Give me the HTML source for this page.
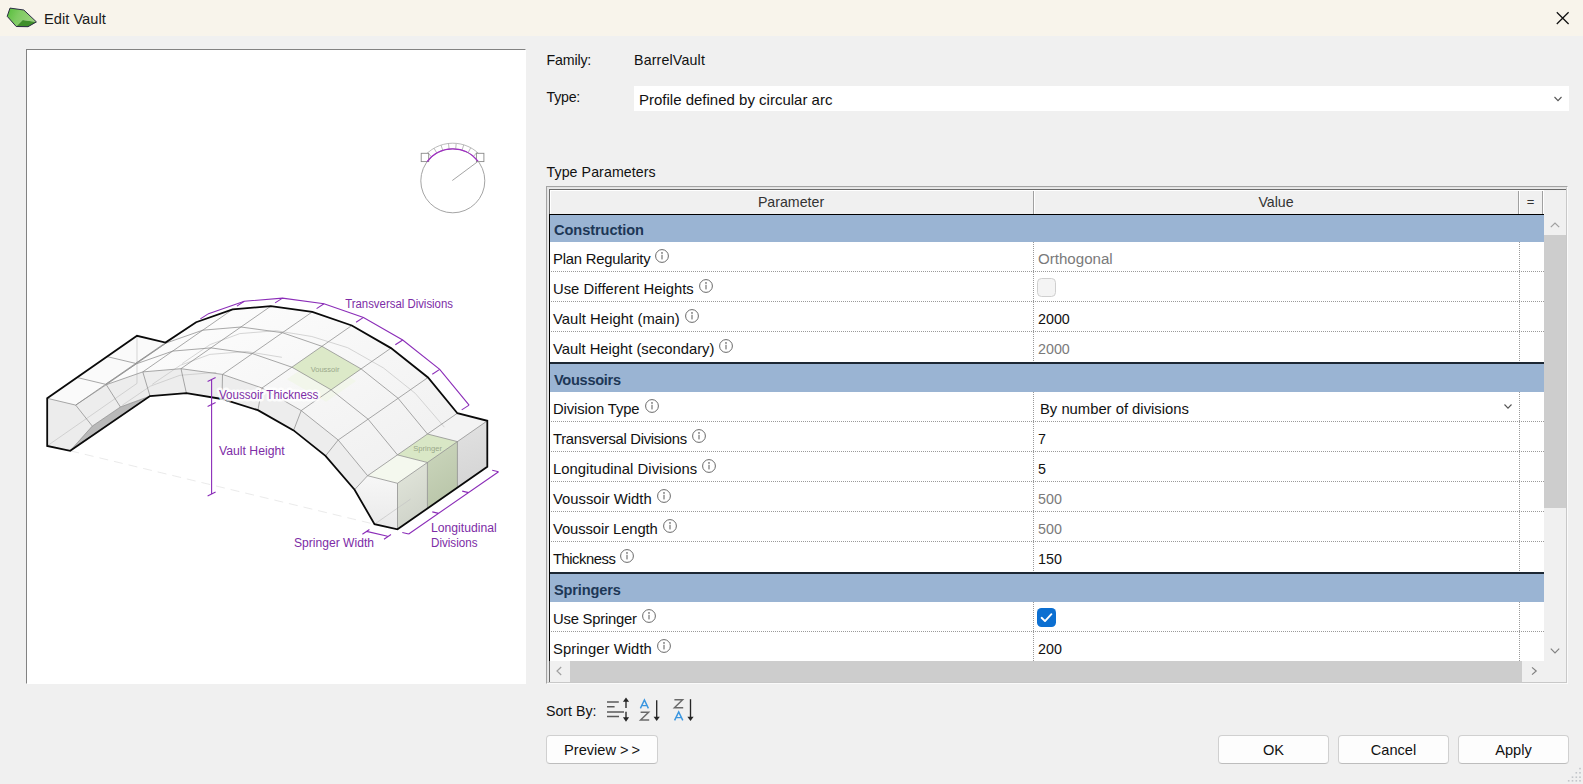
<!DOCTYPE html>
<html><head><meta charset="utf-8"><title>Edit Vault</title>
<style>
*{box-sizing:border-box;margin:0;padding:0}
html,body{width:1583px;height:784px;overflow:hidden;background:#f0f0f0;font-family:"Liberation Sans",sans-serif;color:#000}
.abs{position:absolute}
#title{left:0;top:0;width:1583px;height:36px;background:#f8f4eb}
#title .t{left:44px;top:9.7px;font-size:14.7px;line-height:18px;color:#1a1a1a;white-space:nowrap}
#panel{left:26px;top:49px;width:500px;height:635px;background:#fff;border-top:1px solid #828282;border-left:1px solid #828282;border-right:1px solid #fff;border-bottom:1px solid #fff}
.lbl{font-size:14.2px;line-height:18px;white-space:nowrap;color:#111}
#combo{left:634px;top:86px;width:935px;height:25px;background:#fff}
#tbl{left:546px;top:186px;width:1021px;height:498px;background:#fff;border:1px solid #a0a0a0}
.btn{height:29px;background:#fdfdfd;border:1px solid #d0d0d0;border-bottom-color:#bdbdbd;border-radius:4px;font-size:14.6px;line-height:27px;text-align:center;color:#111;top:735px;padding-top:1.3px}

.hd{top:193px;height:18px;line-height:18px;font-size:14.2px;text-align:center;color:#333}
.band{left:549px;width:995px;height:28px;background:#9ab4d3}
.band span{position:absolute;left:5px;top:6.6px;font-size:14.6px;line-height:18px;font-weight:bold;color:#1d3756;white-space:nowrap}
.row{left:549px;width:995px;background:#fff;overflow:hidden}
.pn,.pv{font-size:14.8px;line-height:18px;white-space:nowrap;color:#111}
.vd{top:0;width:1px;background-image:linear-gradient(#9a9a9a 50%,transparent 50%);background-size:1px 2px}
.hdot{left:0;width:995px;height:1px;background-image:linear-gradient(90deg,#9a9a9a 50%,transparent 50%);background-size:2px 1px}
</style></head><body>
<div id="title" class="abs">
<svg class="abs" style="left:5px;top:6px" width="34" height="24" viewBox="5 6 34 24"><defs><linearGradient id="ig" x1="0" y1="0" x2="1" y2="0.3"><stop offset="0" stop-color="#55bd3a"/><stop offset="0.45" stop-color="#7fcb62"/><stop offset="1" stop-color="#9ad27c"/></linearGradient></defs><polygon points="7.2,16.3 10,8.1 23.8,10 36.4,21.9 22.7,20 16.2,26.5" fill="url(#ig)"/><polygon points="16.2,26.5 22.7,20 36.4,21.9 28,26.7" fill="#3f8f2a"/><polygon points="7.2,16.3 10,8.1 23.8,10 36.4,21.9 28,26.7 16.2,26.5" fill="none" stroke="#24223f" stroke-width="0.95" stroke-linejoin="round"/></svg>
<div class="abs t">Edit Vault</div>
<svg class="abs" style="left:1555px;top:10px" width="16" height="16" viewBox="0 0 16 16"><path d="M1.8 2.2L13.6 14M13.6 2.2L1.8 14" stroke="#111" stroke-width="1.25" fill="none"/></svg>
</div>
<div id="panel" class="abs"></div>
<div class="abs lbl" style="left:546.5px;top:51px;letter-spacing:-0.15px">Family:</div>
<div class="abs lbl" style="left:634px;top:51px;letter-spacing:0.17px">BarrelVault</div>
<div class="abs lbl" style="left:546.5px;top:88px;letter-spacing:-0.24px">Type:</div>
<div id="combo" class="abs"><div class="abs" style="left:5px;top:5px;font-size:15px;line-height:18px;white-space:nowrap;color:#111">Profile defined by circular arc</div><svg class="abs" style="left:918.5px;top:8.6px" width="10" height="8" viewBox="0 0 10 8"><path d="M1.5 2L5 5.6L8.5 2" fill="none" stroke="#555" stroke-width="1.1"/></svg></div>
<div class="abs lbl" style="left:546.5px;top:162.7px;letter-spacing:0.08px">Type Parameters</div>

<div class="abs" style="left:546px;top:186px;width:1022px;height:498px;border:1px solid #a3a3a3;border-right-color:#fafafa;border-bottom-color:#fafafa;background:#fff"></div>
<div class="abs" style="left:547px;top:187px;width:1020px;height:496px;border:1px solid #e3e3e3;border-right-color:#c8c8c8;border-bottom-color:#c8c8c8"></div>
<div class="abs" style="left:548px;top:188px;width:1018px;height:494px;border-top:1px solid #e9e9e9;border-left:1px solid #e9e9e9"></div>
<div class="abs" style="left:549px;top:189px;width:1017px;height:493px;border-top:1px solid #6b6b6b;border-left:1px solid #6b6b6b;z-index:3"></div>
<div class="abs" style="left:550px;top:190px;width:994px;height:24px;background:#f0f0f0;border-top:1px solid #fff;border-left:1px solid #fff"></div>
<div class="abs" style="left:1544px;top:190px;width:22px;height:24px;background:#f0f0f0"></div>
<div class="abs" style="left:1033px;top:191px;width:1px;height:23px;background:#a0a0a0"></div>
<div class="abs" style="left:1034px;top:191px;width:1px;height:23px;background:#fff"></div>
<div class="abs" style="left:1518px;top:191px;width:1px;height:23px;background:#a0a0a0"></div>
<div class="abs" style="left:1519px;top:191px;width:1px;height:23px;background:#fff"></div>
<div class="abs" style="left:1542px;top:191px;width:1px;height:23px;background:#a0a0a0"></div>
<div class="abs" style="left:1543px;top:191px;width:1px;height:23px;background:#fff"></div>
<div class="abs hd" style="left:549px;width:484px">Parameter</div>
<div class="abs hd" style="left:1034px;width:484px">Value</div>
<div class="abs hd" style="left:1519px;width:23px;font-size:13px">=</div>
<div class="abs" style="left:549px;top:214px;width:995px;height:1px;background:#000;z-index:4"></div>
<div class="abs" style="left:549px;top:214px;width:1px;height:447px;background:#000;z-index:4"></div>
<div class="abs band" style="top:214px"><span style="letter-spacing:-0.07px">Construction</span></div>
<div class="abs row" style="top:242px;height:30px">
<div class="abs pn" style="left:4px;top:7.5px;letter-spacing:-0.196px">Plan Regularity</div>
<svg class="abs" style="left:105.4px;top:6px" width="16" height="16" viewBox="0 0 16 16"><circle cx="8" cy="8" r="6.4" fill="none" stroke="#6a6a6a" stroke-width="1"/><circle cx="8" cy="4.9" r="0.85" fill="#6a6a6a"/><rect x="7.45" y="6.8" width="1.1" height="4.6" fill="#6a6a6a"/></svg>
<div class="abs pv" style="left:489px;top:7.7px;color:#7a7a7a;font-size:15.1px">Orthogonal</div>
<div class="abs vd" style="left:484px;height:30px"></div><div class="abs vd" style="left:970px;height:30px"></div>
<div class="abs hdot" style="top:29px"></div>
</div>
<div class="abs row" style="top:272px;height:30px">
<div class="abs pn" style="left:4px;top:7.5px;letter-spacing:0.02px">Use Different Heights</div>
<svg class="abs" style="left:148.8px;top:6px" width="16" height="16" viewBox="0 0 16 16"><circle cx="8" cy="8" r="6.4" fill="none" stroke="#6a6a6a" stroke-width="1"/><circle cx="8" cy="4.9" r="0.85" fill="#6a6a6a"/><rect x="7.45" y="6.8" width="1.1" height="4.6" fill="#6a6a6a"/></svg>
<div class="abs" style="left:488px;top:6px;width:19px;height:19px;border:1px solid #cfcfcf;border-radius:4.5px;background:#f4f4f4"></div>
<div class="abs vd" style="left:484px;height:30px"></div><div class="abs vd" style="left:970px;height:30px"></div>
<div class="abs hdot" style="top:29px"></div>
</div>
<div class="abs row" style="top:302px;height:30px">
<div class="abs pn" style="left:4px;top:7.5px;letter-spacing:0.06px">Vault Height (main)</div>
<svg class="abs" style="left:134.7px;top:6px" width="16" height="16" viewBox="0 0 16 16"><circle cx="8" cy="8" r="6.4" fill="none" stroke="#6a6a6a" stroke-width="1"/><circle cx="8" cy="4.9" r="0.85" fill="#6a6a6a"/><rect x="7.45" y="6.8" width="1.1" height="4.6" fill="#6a6a6a"/></svg>
<div class="abs pv" style="left:489px;top:7.7px;font-size:14.3px">2000</div>
<div class="abs vd" style="left:484px;height:30px"></div><div class="abs vd" style="left:970px;height:30px"></div>
<div class="abs hdot" style="top:29px"></div>
</div>
<div class="abs row" style="top:332px;height:30px">
<div class="abs pn" style="left:4px;top:7.5px;letter-spacing:-0.015px">Vault Height (secondary)</div>
<svg class="abs" style="left:169.4px;top:6px" width="16" height="16" viewBox="0 0 16 16"><circle cx="8" cy="8" r="6.4" fill="none" stroke="#6a6a6a" stroke-width="1"/><circle cx="8" cy="4.9" r="0.85" fill="#6a6a6a"/><rect x="7.45" y="6.8" width="1.1" height="4.6" fill="#6a6a6a"/></svg>
<div class="abs pv" style="left:489px;top:7.7px;color:#7a7a7a;font-size:14.3px">2000</div>
<div class="abs vd" style="left:484px;height:30px"></div><div class="abs vd" style="left:970px;height:30px"></div>
</div>
<div class="abs" style="left:549px;top:362px;width:995px;height:2px;background:#1c2733"></div>
<div class="abs band" style="top:364px"><span style="letter-spacing:-0.3px">Voussoirs</span></div>
<div class="abs row" style="top:392px;height:30px">
<div class="abs pn" style="left:4px;top:7.5px;letter-spacing:-0.095px">Division Type</div>
<svg class="abs" style="left:94.5px;top:6px" width="16" height="16" viewBox="0 0 16 16"><circle cx="8" cy="8" r="6.4" fill="none" stroke="#6a6a6a" stroke-width="1"/><circle cx="8" cy="4.9" r="0.85" fill="#6a6a6a"/><rect x="7.45" y="6.8" width="1.1" height="4.6" fill="#6a6a6a"/></svg>
<div class="abs pv" style="left:491px;top:7.5px">By number of divisions</div>
<svg class="abs" style="left:954px;top:11px" width="10" height="8" viewBox="0 0 10 8"><path d="M1.5 1.5L5 5.2L8.5 1.5" fill="none" stroke="#555" stroke-width="1.1"/></svg>
<div class="abs vd" style="left:484px;height:30px"></div><div class="abs vd" style="left:970px;height:30px"></div>
<div class="abs hdot" style="top:29px"></div>
</div>
<div class="abs row" style="top:422px;height:30px">
<div class="abs pn" style="left:4px;top:7.5px;letter-spacing:-0.298px">Transversal Divisions</div>
<svg class="abs" style="left:141.8px;top:6px" width="16" height="16" viewBox="0 0 16 16"><circle cx="8" cy="8" r="6.4" fill="none" stroke="#6a6a6a" stroke-width="1"/><circle cx="8" cy="4.9" r="0.85" fill="#6a6a6a"/><rect x="7.45" y="6.8" width="1.1" height="4.6" fill="#6a6a6a"/></svg>
<div class="abs pv" style="left:489px;top:7.7px;font-size:14.3px">7</div>
<div class="abs vd" style="left:484px;height:30px"></div><div class="abs vd" style="left:970px;height:30px"></div>
<div class="abs hdot" style="top:29px"></div>
</div>
<div class="abs row" style="top:452px;height:30px">
<div class="abs pn" style="left:4px;top:7.5px;letter-spacing:0.049px">Longitudinal Divisions</div>
<svg class="abs" style="left:152.2px;top:6px" width="16" height="16" viewBox="0 0 16 16"><circle cx="8" cy="8" r="6.4" fill="none" stroke="#6a6a6a" stroke-width="1"/><circle cx="8" cy="4.9" r="0.85" fill="#6a6a6a"/><rect x="7.45" y="6.8" width="1.1" height="4.6" fill="#6a6a6a"/></svg>
<div class="abs pv" style="left:489px;top:7.7px;font-size:14.3px">5</div>
<div class="abs vd" style="left:484px;height:30px"></div><div class="abs vd" style="left:970px;height:30px"></div>
<div class="abs hdot" style="top:29px"></div>
</div>
<div class="abs row" style="top:482px;height:30px">
<div class="abs pn" style="left:4px;top:7.5px;letter-spacing:0.0px">Voussoir Width</div>
<svg class="abs" style="left:106.7px;top:6px" width="16" height="16" viewBox="0 0 16 16"><circle cx="8" cy="8" r="6.4" fill="none" stroke="#6a6a6a" stroke-width="1"/><circle cx="8" cy="4.9" r="0.85" fill="#6a6a6a"/><rect x="7.45" y="6.8" width="1.1" height="4.6" fill="#6a6a6a"/></svg>
<div class="abs pv" style="left:489px;top:7.7px;color:#7a7a7a;font-size:14.3px">500</div>
<div class="abs vd" style="left:484px;height:30px"></div><div class="abs vd" style="left:970px;height:30px"></div>
<div class="abs hdot" style="top:29px"></div>
</div>
<div class="abs row" style="top:512px;height:30px">
<div class="abs pn" style="left:4px;top:7.5px;letter-spacing:-0.095px">Voussoir Length</div>
<svg class="abs" style="left:112.7px;top:6px" width="16" height="16" viewBox="0 0 16 16"><circle cx="8" cy="8" r="6.4" fill="none" stroke="#6a6a6a" stroke-width="1"/><circle cx="8" cy="4.9" r="0.85" fill="#6a6a6a"/><rect x="7.45" y="6.8" width="1.1" height="4.6" fill="#6a6a6a"/></svg>
<div class="abs pv" style="left:489px;top:7.7px;color:#7a7a7a;font-size:14.3px">500</div>
<div class="abs vd" style="left:484px;height:30px"></div><div class="abs vd" style="left:970px;height:30px"></div>
<div class="abs hdot" style="top:29px"></div>
</div>
<div class="abs row" style="top:542px;height:30px">
<div class="abs pn" style="left:4px;top:7.5px;letter-spacing:-0.479px">Thickness</div>
<svg class="abs" style="left:70.3px;top:6px" width="16" height="16" viewBox="0 0 16 16"><circle cx="8" cy="8" r="6.4" fill="none" stroke="#6a6a6a" stroke-width="1"/><circle cx="8" cy="4.9" r="0.85" fill="#6a6a6a"/><rect x="7.45" y="6.8" width="1.1" height="4.6" fill="#6a6a6a"/></svg>
<div class="abs pv" style="left:489px;top:7.7px;font-size:14.3px">150</div>
<div class="abs vd" style="left:484px;height:30px"></div><div class="abs vd" style="left:970px;height:30px"></div>
</div>
<div class="abs" style="left:549px;top:572px;width:995px;height:2px;background:#1c2733"></div>
<div class="abs band" style="top:574px"><span style="letter-spacing:-0.16px">Springers</span></div>
<div class="abs row" style="top:602px;height:30px">
<div class="abs pn" style="left:4px;top:7.5px;letter-spacing:-0.213px">Use Springer</div>
<svg class="abs" style="left:91.8px;top:6px" width="16" height="16" viewBox="0 0 16 16"><circle cx="8" cy="8" r="6.4" fill="none" stroke="#6a6a6a" stroke-width="1"/><circle cx="8" cy="4.9" r="0.85" fill="#6a6a6a"/><rect x="7.45" y="6.8" width="1.1" height="4.6" fill="#6a6a6a"/></svg>
<div class="abs" style="left:488px;top:6px;width:19px;height:19px;border-radius:4.5px;background:#0c6fd1"></div>
<svg class="abs" style="left:488px;top:6px" width="19" height="19" viewBox="0 0 19 19"><path d="M4.6 9.8L8 13.1L14.4 6.2" fill="none" stroke="#fff" stroke-width="1.9" stroke-linecap="round" stroke-linejoin="round"/></svg>
<div class="abs vd" style="left:484px;height:30px"></div><div class="abs vd" style="left:970px;height:30px"></div>
<div class="abs hdot" style="top:29px"></div>
</div>
<div class="abs row" style="top:632px;height:29px">
<div class="abs pn" style="left:4px;top:7.5px;letter-spacing:0.073px">Springer Width</div>
<svg class="abs" style="left:106.9px;top:6px" width="16" height="16" viewBox="0 0 16 16"><circle cx="8" cy="8" r="6.4" fill="none" stroke="#6a6a6a" stroke-width="1"/><circle cx="8" cy="4.9" r="0.85" fill="#6a6a6a"/><rect x="7.45" y="6.8" width="1.1" height="4.6" fill="#6a6a6a"/></svg>
<div class="abs pv" style="left:489px;top:7.7px;font-size:14.3px">200</div>
<div class="abs vd" style="left:484px;height:29px"></div><div class="abs vd" style="left:970px;height:29px"></div>
</div>

<div class="abs" style="left:1544px;top:214px;width:22px;height:447px;background:#f0f0f0"></div>
<div class="abs" style="left:1544px;top:235px;width:22px;height:273px;background:#cdcdcd"></div>
<svg class="abs" style="left:1549px;top:220px" width="12" height="10" viewBox="0 0 12 10"><path d="M1.8 7.2L6 3L10.2 7.2" fill="none" stroke="#a0a0a0" stroke-width="1.2"/></svg>
<svg class="abs" style="left:1549px;top:645.5px" width="12" height="10" viewBox="0 0 12 10"><path d="M1.8 2.6L6 6.8L10.2 2.6" fill="none" stroke="#808080" stroke-width="1.2"/></svg>
<div class="abs" style="left:549px;top:661px;width:1017px;height:21px;background:#f0f0f0"></div>
<div class="abs" style="left:570px;top:661px;width:952px;height:21px;background:#cdcdcd"></div>
<svg class="abs" style="left:554px;top:665px" width="10" height="12" viewBox="0 0 10 12"><path d="M7.2 2L3 6L7.2 10" fill="none" stroke="#a0a0a0" stroke-width="1.2"/></svg>
<svg class="abs" style="left:1529px;top:665px" width="10" height="12" viewBox="0 0 10 12"><path d="M3 2.4L7.2 6L3 9.6" fill="none" stroke="#808080" stroke-width="1.2"/></svg>

<svg class="abs" style="left:27px;top:50px" width="498" height="633" viewBox="27 50 498 633" font-family="'Liberation Sans',sans-serif">
<defs><linearGradient id="gt" x1="0" y1="0" x2="1" y2="1"><stop offset="0" stop-color="#ffffff"/><stop offset="1" stop-color="#efefef"/></linearGradient><linearGradient id="g1" x1="0" y1="0" x2="0.3" y2="1"><stop offset="0" stop-color="#e3e7dc"/><stop offset="1" stop-color="#cfd3c9"/></linearGradient><linearGradient id="g2" x1="0" y1="0" x2="0.3" y2="1"><stop offset="0" stop-color="#ccd7bd"/><stop offset="1" stop-color="#bac6aa"/></linearGradient><linearGradient id="g3" x1="0" y1="0" x2="0.3" y2="1"><stop offset="0" stop-color="#e6e6e6"/><stop offset="1" stop-color="#d0d0d0"/></linearGradient><linearGradient id="g4" x1="0" y1="0" x2="0" y2="1"><stop offset="0" stop-color="#f7f7f7"/><stop offset="1" stop-color="#e9e9e9"/></linearGradient></defs>
<circle cx="452.8" cy="180.8" r="32.0" fill="none" stroke="#9a9a9a" stroke-width="0.9"/>
<path d="M452.3 180.5L477.5 161.8" stroke="#9a9a9a" stroke-width="0.9"/>
<path d="M422.6 158.4A37.6 37.6 0 0 1 482.4 157.6" fill="none" stroke="#a8a8a8" stroke-width="0.8"/>
<path d="M431.5 156.9L427.8 152.7" stroke="#a8a8a8" stroke-width="0.8"/>
<path d="M436.8 153.1L434.0 148.2" stroke="#a8a8a8" stroke-width="0.8"/>
<path d="M442.8 150.4L441.0 145.1" stroke="#a8a8a8" stroke-width="0.8"/>
<path d="M449.1 149.0L448.5 143.4" stroke="#a8a8a8" stroke-width="0.8"/>
<path d="M455.7 148.9L456.2 143.4" stroke="#a8a8a8" stroke-width="0.8"/>
<path d="M462.1 150.2L463.7 144.8" stroke="#a8a8a8" stroke-width="0.8"/>
<path d="M468.1 152.7L470.7 147.8" stroke="#a8a8a8" stroke-width="0.8"/>
<path d="M473.5 156.4L477.1 152.1" stroke="#a8a8a8" stroke-width="0.8"/>
<rect x="421.2" y="153.3" width="7.5" height="8.3" fill="#fff" stroke="#8a8a8a" stroke-width="0.9"/>
<rect x="476.4" y="153.3" width="7.5" height="8.3" fill="#fff" stroke="#8a8a8a" stroke-width="0.9"/>
<path d="M427.1 161.7A32.0 32.0 0 0 1 478.0 161.1" fill="none" stroke="#a02cc4" stroke-width="1.3"/>
<path d="M70.2 450.8L374.5 524.2" stroke="#e4e4e4" stroke-width="0.8" stroke-dasharray="9 6" fill="none"/>
<polygon points="47.2,398.3 75.7,405.1 165.5,342.6 137.0,335.8" fill="#fafafa"/>
<polygon points="75.7,405.1 106.3,384.7 142.8,371.9 181.0,368.7 222.5,374.4 262.0,388.0 301.2,410.6 338.2,440.0 367.6,475.7 457.4,413.2 428.0,377.5 391.0,348.1 351.8,325.5 312.3,311.9 270.8,306.2 232.6,309.4 196.1,322.2 165.5,342.6" fill="url(#gt)"/>
<polygon points="47.2,445.9 47.2,398.3 75.7,405.1 92.3,426.1 70.2,450.8" fill="#ececec"/>
<polygon points="70.2,450.8 92.3,426.1 120.4,407.0 150.0,396.1" fill="#b9b9b9"/>
<polygon points="75.7,405.1 106.3,384.7 142.8,371.9 181.0,368.7 222.5,374.4 262.0,388.0 301.2,410.6 338.2,440.0 367.6,475.7 354.6,489.7 325.5,455.9 293.6,430.4 257.9,410.2 222.0,399.0 186.4,393.2 150.0,396.1 120.4,407.0 92.3,426.1" fill="#ededed"/>
<polygon points="367.6,475.7 397.5,483.3 397.5,529.3 374.5,524.2 354.6,489.7" fill="url(#g4)"/>
<polygon points="367.6,475.7 397.5,483.3 487.3,420.8 457.4,413.2" fill="#f3f3f3"/>
<polygon points="397.5,483.3 487.3,420.8 487.3,466.8 397.5,529.3" fill="url(#g3)"/>
<polygon points="286.9,379.2 316.9,358.3 356.1,380.9 326.1,401.8" fill="#f2f6eb"/>
<polygon points="291.9,367.2 321.9,346.3 361.1,368.9 331.1,389.8" fill="#dce9c8"/>
<polygon points="397.5,454.9 427.5,434.0 457.4,441.6 427.4,462.5" fill="#d9e7c6"/>
<polygon points="427.4,462.5 457.4,441.6 457.4,487.6 427.4,508.5" fill="url(#g2)"/>
<polygon points="397.5,483.3 427.4,462.5 427.4,508.5 397.5,529.3" fill="url(#g1)"/>
<polygon points="367.6,475.7 397.5,454.9 427.4,462.5 397.5,483.3" fill="#f4f8ee"/>
<polyline points="182.1,363.6 210.2,344.5 239.8,333.6 276.2,330.7 311.8,336.5 347.7,347.7 383.4,367.9 415.3,393.4 444.4,427.2" stroke="#c4c4c4" stroke-width="0.7" fill="none"/>
<polyline points="122.2,405.3 150.3,386.2 179.9,375.3 216.3,372.4" stroke="#c4c4c4" stroke-width="0.7" fill="none"/>
<polyline points="152.2,384.4 180.3,365.3 209.9,354.4 246.3,351.5 281.9,357.3" stroke="#c4c4c4" stroke-width="0.7" fill="none"/>
<path d="M47.2 445.9L137.0 383.4M137.0 335.8L137.0 383.4" stroke="#c4c4c4" stroke-width="0.7" fill="none"/>
<path d="M374.5 524.2L410.4 499.2" stroke="#c4c4c4" stroke-width="0.7" fill="none"/>
<path d="M75.7 405.1L165.5 342.6" stroke="#8c8c8c" stroke-width="0.75" fill="none"/>
<path d="M75.7 405.1L92.3 426.1" stroke="#8c8c8c" stroke-width="0.75" fill="none"/>
<path d="M106.3 384.7L196.1 322.2" stroke="#8c8c8c" stroke-width="0.75" fill="none"/>
<path d="M106.3 384.7L120.4 407" stroke="#8c8c8c" stroke-width="0.75" fill="none"/>
<path d="M142.8 371.9L232.6 309.4" stroke="#8c8c8c" stroke-width="0.75" fill="none"/>
<path d="M142.8 371.9L150 396.1" stroke="#8c8c8c" stroke-width="0.75" fill="none"/>
<path d="M181 368.7L270.8 306.2" stroke="#8c8c8c" stroke-width="0.75" fill="none"/>
<path d="M181 368.7L186.4 393.2" stroke="#8c8c8c" stroke-width="0.75" fill="none"/>
<path d="M222.5 374.4L312.3 311.9" stroke="#8c8c8c" stroke-width="0.75" fill="none"/>
<path d="M222.5 374.4L222 399" stroke="#8c8c8c" stroke-width="0.75" fill="none"/>
<path d="M262 388L351.8 325.5" stroke="#8c8c8c" stroke-width="0.75" fill="none"/>
<path d="M262 388L257.9 410.2" stroke="#8c8c8c" stroke-width="0.75" fill="none"/>
<path d="M301.2 410.6L391.0 348.1" stroke="#8c8c8c" stroke-width="0.75" fill="none"/>
<path d="M301.2 410.6L293.6 430.4" stroke="#8c8c8c" stroke-width="0.75" fill="none"/>
<path d="M338.2 440L428.0 377.5" stroke="#8c8c8c" stroke-width="0.75" fill="none"/>
<path d="M338.2 440L325.5 455.9" stroke="#8c8c8c" stroke-width="0.75" fill="none"/>
<path d="M367.6 475.7L457.4 413.2" stroke="#8c8c8c" stroke-width="0.75" fill="none"/>
<path d="M367.6 475.7L354.6 489.7" stroke="#8c8c8c" stroke-width="0.75" fill="none"/>
<polyline points="47.2,398.3 75.7,405.1 106.3,384.7 142.8,371.9 181.0,368.7 222.5,374.4 262.0,388.0 301.2,410.6 338.2,440.0 367.6,475.7 397.5,483.3" stroke="#8c8c8c" stroke-width="0.75" fill="none"/>
<polyline points="77.1,377.5 105.6,384.3 136.2,363.9 172.7,351.1 210.9,347.9 252.4,353.6 291.9,367.2 331.1,389.8 368.1,419.2 397.5,454.9 427.4,462.5" stroke="#8c8c8c" stroke-width="0.75" fill="none"/>
<polyline points="107.1,356.6 135.6,363.4 166.2,343.0 202.7,330.2 240.9,327.0 282.4,332.7 321.9,346.3 361.1,368.9 398.1,398.3 427.5,434.0 457.4,441.6" stroke="#8c8c8c" stroke-width="0.75" fill="none"/>
<path d="M397.5 483.3L487.3 420.8" stroke="#8c8c8c" stroke-width="0.75" fill="none"/>
<path d="M397.5 483.3L397.5 529.3" stroke="#8c8c8c" stroke-width="0.75" fill="none"/>
<path d="M427.4 462.5L427.4 508.5" stroke="#8c8c8c" stroke-width="0.75" fill="none"/>
<path d="M457.4 441.6L457.4 487.6" stroke="#8c8c8c" stroke-width="0.75" fill="none"/>
<path d="M70.2 450.8L92.3 426.1" stroke="#8c8c8c" stroke-width="0.75" fill="none"/>
<polyline points="92.3,426.1 120.4,407.0 150.0,396.1" stroke="#8c8c8c" stroke-width="0.75" fill="none"/>
<polygon points="47.2,445.9 47.2,398.3 137.0,335.8 165.5,342.6 196.1,322.2 232.6,309.4 270.8,306.2 312.3,311.9 351.8,325.5 391.0,348.1 428.0,377.5 457.4,413.2 487.3,420.8 487.3,466.8 397.5,529.3 374.5,524.2 354.6,489.7 325.5,455.9 293.6,430.4 257.9,410.2 222.0,399.0 186.4,393.2 150.0,396.1 70.2,450.8" fill="none" stroke="#0a0a0a" stroke-width="1.8" stroke-linejoin="miter"/>
<polyline points="207.8,314.1 244.3,301.3 282.5,298.1 324.0,303.8 363.5,317.4 402.7,340.0 439.7,369.4 469.1,405.1" stroke="#8b2db8" stroke-width="1.1" fill="none"/>
<path d="M207.8 314.1l-7.4 4.8" stroke="#8b2db8" stroke-width="1.1" fill="none"/>
<path d="M244.3 301.3l-7.4 4.8" stroke="#8b2db8" stroke-width="1.1" fill="none"/>
<path d="M282.5 298.1l-7.4 4.8" stroke="#8b2db8" stroke-width="1.1" fill="none"/>
<path d="M324.0 303.8l-7.4 4.8" stroke="#8b2db8" stroke-width="1.1" fill="none"/>
<path d="M363.5 317.4l-7.4 4.8" stroke="#8b2db8" stroke-width="1.1" fill="none"/>
<path d="M402.7 340.0l-7.4 4.8" stroke="#8b2db8" stroke-width="1.1" fill="none"/>
<path d="M439.7 369.4l-7.4 4.8" stroke="#8b2db8" stroke-width="1.1" fill="none"/>
<path d="M469.1 405.1l-7.4 4.8" stroke="#8b2db8" stroke-width="1.1" fill="none"/>
<path d="M211.6 379.5V494M207.6 381.5l8 -4M207.6 406.4l8 -4M207.6 496l8 -4" stroke="#8b2db8" stroke-width="1.1" fill="none"/>
<path d="M408.7 534L498.6 471.7M402.3 532.5l6.4 1.5M432.3 511.9l6.4 1.5M462.2 491.1l6.4 1.5M492.2 470.2l6.4 1.5" stroke="#8b2db8" stroke-width="1.1" fill="none"/>
<path d="M366.6 531.4L387.6 536.3M362.4 534.3l7 -4.8M384 539.3l7 -4.8" stroke="#8b2db8" stroke-width="1.1" fill="none"/>
<text x="345.2" y="308.3" font-size="12" fill="#7d2ca6" textLength="107.8" lengthAdjust="spacingAndGlyphs" stroke="#fff" stroke-opacity="0.8" stroke-width="5" stroke-linejoin="round" paint-order="stroke">Transversal Divisions</text>
<text x="219" y="398.5" font-size="12" fill="#7d2ca6" textLength="99.4" lengthAdjust="spacingAndGlyphs" stroke="#fff" stroke-opacity="0.8" stroke-width="5" stroke-linejoin="round" paint-order="stroke">Voussoir Thickness</text>
<text x="219" y="455.2" font-size="12" fill="#7d2ca6" textLength="65.7" lengthAdjust="spacingAndGlyphs" stroke="#fff" stroke-opacity="0.8" stroke-width="5" stroke-linejoin="round" paint-order="stroke">Vault Height</text>
<text x="294" y="547" font-size="12" fill="#7d2ca6" textLength="80" lengthAdjust="spacingAndGlyphs" stroke="#fff" stroke-opacity="0.8" stroke-width="5" stroke-linejoin="round" paint-order="stroke">Springer Width</text>
<text x="431" y="532.2" font-size="12" fill="#7d2ca6" textLength="65.7" lengthAdjust="spacingAndGlyphs" stroke="#fff" stroke-opacity="0.8" stroke-width="5" stroke-linejoin="round" paint-order="stroke">Longitudinal</text>
<text x="431" y="546.7" font-size="12" fill="#7d2ca6" textLength="46.5" lengthAdjust="spacingAndGlyphs" stroke="#fff" stroke-opacity="0.8" stroke-width="5" stroke-linejoin="round" paint-order="stroke">Divisions</text>
<text x="310.7" y="372" font-size="7.5" fill="#9aa88a" textLength="28.7" lengthAdjust="spacingAndGlyphs" stroke="#fff" stroke-opacity="0" stroke-width="5" stroke-linejoin="round" paint-order="stroke">Voussoir</text>
<text x="413.3" y="451.2" font-size="7.5" fill="#9aa88a" textLength="28.7" lengthAdjust="spacingAndGlyphs" stroke="#fff" stroke-opacity="0" stroke-width="5" stroke-linejoin="round" paint-order="stroke">Springer</text>
</svg>

<div class="abs lbl" style="left:546px;top:702px;letter-spacing:0px">Sort By:</div>

<svg class="abs" style="left:600px;top:694px" width="100" height="32" viewBox="600 694 100 32">
<g stroke="#5a5a5a" stroke-width="1.5" fill="none">
<path d="M607 702.1H618.8M607 706.7H614.6M607 712H624M607 716.6H619"/>
</g>
<g stroke="#262626" stroke-width="1.35" fill="#262626">
<path d="M626 699.5V708M626 711.8V719.5" fill="none"/>
<path d="M622.9 701.8L626 697.4L629.1 701.8Z M622.9 717.3L626 721.7L629.1 717.3Z" stroke="none"/>
<path d="M656.7 700.2V719" fill="none"/><path d="M653.6 716.7L656.7 721.1L659.8 716.7Z" stroke="none"/>
<path d="M690.5 699.2V719" fill="none"/><path d="M687.4 716.7L690.5 721.1L693.6 716.7Z" stroke="none"/>
</g>
<g fill="none" stroke-width="1.45" stroke-linejoin="miter">
<path d="M640.4 708.4L644.4 700L648.4 708.4M641.9 705.6H646.9" stroke="#3a96e0"/>
<path d="M640.6 712.3H648.6L640.6 719.9H649.2" stroke="#6a6a6a"/>
<path d="M674.4 699.8H682.6L674.4 707.8H683.2" stroke="#6a6a6a"/>
<path d="M674.6 720.4L678.7 712L682.8 720.4M676.1 717.6H681.3" stroke="#3a96e0"/>
</g>
</svg>
<div class="abs btn" style="left:546px;width:112px">Preview &gt;&thinsp;&gt;</div>
<div class="abs btn" style="left:1218px;width:111px">OK</div>
<div class="abs btn" style="left:1338px;width:111px">Cancel</div>
<div class="abs btn" style="left:1458px;width:111px">Apply</div>
<svg class="abs" id="grip" style="left:1563px;top:764px" width="20" height="20" viewBox="1563 764 20 20"><rect x="1579.2" y="767.8" width="1.6" height="1.6" fill="#c2c5ca"/><rect x="1575.5" y="772.0" width="1.6" height="1.6" fill="#c2c5ca"/><rect x="1579.2" y="772.0" width="1.6" height="1.6" fill="#c2c5ca"/><rect x="1571.7" y="776.4" width="1.6" height="1.6" fill="#c2c5ca"/><rect x="1575.5" y="776.4" width="1.6" height="1.6" fill="#c2c5ca"/><rect x="1579.2" y="776.4" width="1.6" height="1.6" fill="#c2c5ca"/><rect x="1567.9" y="780.0" width="1.6" height="1.6" fill="#c2c5ca"/><rect x="1571.7" y="780.0" width="1.6" height="1.6" fill="#c2c5ca"/><rect x="1575.5" y="780.0" width="1.6" height="1.6" fill="#c2c5ca"/><rect x="1579.2" y="780.0" width="1.6" height="1.6" fill="#c2c5ca"/></svg>
</body></html>
